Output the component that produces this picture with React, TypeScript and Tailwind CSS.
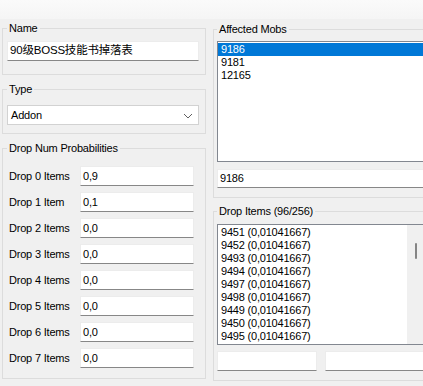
const FONT = "font-['Liberation_Sans','Noto_Sans_CJK_SC',sans-serif]"

const DROP_ROWS = [
  { label: 'Drop 0 Items', value: '0,9' },
  { label: 'Drop 1 Item', value: '0,1' },
  { label: 'Drop 2 Items', value: '0,0' },
  { label: 'Drop 3 Items', value: '0,0' },
  { label: 'Drop 4 Items', value: '0,0' },
  { label: 'Drop 5 Items', value: '0,0' },
  { label: 'Drop 6 Items', value: '0,0' },
  { label: 'Drop 7 Items', value: '0,0' },
]

const MOBS = ['9186', '9181', '12165']

const DROP_ITEMS = ['9451', '9452', '9493', '9494', '9497', '9498', '9449', '9450', '9495']

function TextBox({ value, className = '' }: { value?: string; className?: string }) {
  return (
    <div
      className={`bg-white border border-[#ececec] border-b-[#878787] pl-[2px] flex items-center text-black whitespace-nowrap overflow-hidden ${className}`}
    >
      {value}
    </div>
  )
}

function Group({ title, className = '', children }: { title: string; className?: string; children: React.ReactNode }) {
  return (
    <fieldset className={`border border-[#dcdcdc] ${className}`}>
      <legend className="px-[2px] leading-[13px] text-black">{title}</legend>
      {children}
    </fieldset>
  )
}

export default function App() {
  return (
    <div className={`w-[423px] h-[386px] overflow-hidden bg-[#f0f0f0] text-[11px] tracking-[-0.2px] ${FONT}`}>
      {/* toolbar strip */}
      <div className="h-[19px] bg-gradient-to-b from-[#fafafa] to-[#f5f5f5]" />

      <div className="flex">
        {/* left column */}
        <div className="ml-[2px] w-[204px] shrink-0 flex flex-col">
          <Group title="Name" className="mt-[3px] px-[4px] pb-[13px]">
            <TextBox value="90级BOSS技能书掉落表" className="mt-[6px] h-[20px] w-[192px] text-[11.5px]" />
          </Group>

          <Group title="Type" className="mt-[8px] px-[4px] pb-[8px]">
            <div className="mt-[9px] h-[20px] w-[192px] bg-white border border-[#d2d2d2] flex items-center justify-between pl-[3px] pr-[5px]">
              <span className="text-black">Addon</span>
              <svg width="10" height="6" viewBox="0 0 10 6" className="mt-[1px]">
                <polyline points="1,1 5,5 9,1" fill="none" stroke="#606060" strokeWidth="1" />
              </svg>
            </div>
          </Group>

          <Group title="Drop Num Probabilities" className="mt-[8px] px-[4px] pb-[10px]">
            <div className="mt-[11px] flex flex-col gap-[6px]">
              {DROP_ROWS.map(r => (
                <div key={r.label} className="flex items-center h-[20px]">
                  <span className="w-[73px] pl-[2px] text-black">{r.label}</span>
                  <TextBox value={r.value} className="h-[20px] w-[114px]" />
                </div>
              ))}
            </div>
          </Group>
        </div>

        {/* right column */}
        <div className="ml-[7px] w-[216px] shrink-0 flex flex-col">
          <Group title="Affected Mobs" className="mt-[4px] px-[3px] pb-[9px]">
            <div className="mt-[5px] h-[121px] border border-[#828790] bg-white pt-[1px]">
              {MOBS.map((m, i) => (
                <div
                  key={m}
                  className={`h-[13px] leading-[13px] pl-[3px] ${i === 0 ? 'bg-[#0078d7] text-white' : 'text-black'}`}
                >
                  {m}
                </div>
              ))}
            </div>
            <TextBox value="9186" className="mt-[7px] h-[19px] w-full" />
          </Group>

          <Group title="Drop Items (96/256)" className="mt-[7px] px-[3px] pb-[9px]">
            <div className="mt-[6px] h-[121px] border border-[#828790] bg-white flex">
              <div className="flex-1 pt-[1px] overflow-hidden">
                {DROP_ITEMS.map(d => (
                  <div key={d} className="h-[13px] leading-[13px] pl-[3px] text-black whitespace-nowrap">
                    {d} (0,01041667)
                  </div>
                ))}
              </div>
              <div className="w-[17px] bg-[#f0f0f0] pt-[18px] flex justify-center">
                <div className="w-[2px] h-[16px] rounded-full bg-[#858585]" />
              </div>
            </div>
            <div className="mt-[6px] flex gap-[8px]">
              <TextBox className="h-[20px] flex-1" />
              <TextBox className="h-[20px] flex-1" />
            </div>
          </Group>
        </div>
      </div>
    </div>
  )
}
